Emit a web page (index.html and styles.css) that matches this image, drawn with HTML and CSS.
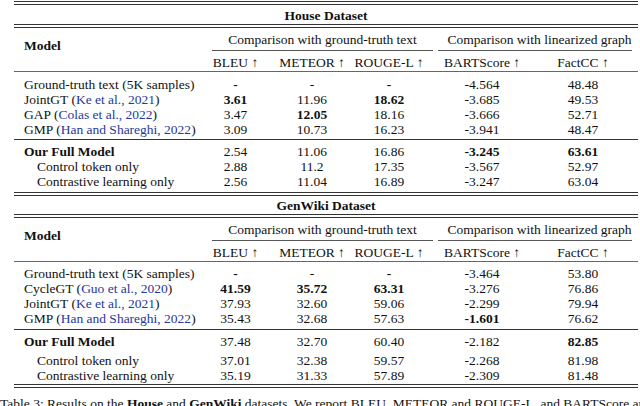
FILE: index.html
```html
<!DOCTYPE html>
<html>
<head>
<meta charset="utf-8">
<link rel="stylesheet" href="styles.css">
</head>
<body>
<div class="page">
  <div class="dbl"></div>
  <div class="title">House Dataset</div>
  <div class="dbl"></div>
  <div class="head">
    <div class="model">Model</div>
    <div class="grp g1">Comparison with ground-truth text</div>
    <div class="grp g2">Comparison with linearized graph</div>
    <div class="h c2">BLEU ↑</div>
    <div class="h c3">METEOR ↑</div>
    <div class="h c4">ROUGE-L ↑</div>
    <div class="h c6">BARTScore ↑</div>
    <div class="h c7">FactCC ↑</div>
  </div>
  <div class="block first mid">
    <div class="row"><span class="name">Ground-truth text (5K samples)</span><span class="b">-</span><span>-</span><span class="b">-</span><span>-4.564</span><span>48.48</span></div>
    <div class="row"><span class="name">JointGT (<span class="cite">Ke et al., 2021</span>)</span><span class="b">3.61</span><span>11.96</span><span class="b">18.62</span><span>-3.685</span><span>49.53</span></div>
    <div class="row"><span class="name">GAP (<span class="cite">Colas et al., 2022</span>)</span><span>3.47</span><span class="b">12.05</span><span>18.16</span><span>-3.666</span><span>52.71</span></div>
    <div class="row"><span class="name">GMP (<span class="cite">Han and Shareghi, 2022</span>)</span><span>3.09</span><span>10.73</span><span>16.23</span><span>-3.941</span><span>48.47</span></div>
  </div>
  <div class="block last">
    <div class="row"><span class="name b">Our Full Model</span><span>2.54</span><span>11.06</span><span>16.86</span><span class="b">-3.245</span><span class="b">63.61</span></div>
    <div class="row"><span class="name sub">Control token only</span><span>2.88</span><span>11.2</span><span>17.35</span><span>-3.567</span><span>52.97</span></div>
    <div class="row"><span class="name sub">Contrastive learning only</span><span>2.56</span><span>11.04</span><span>16.89</span><span>-3.247</span><span>63.04</span></div>
  </div>
  <div class="dbl"></div>
  <div class="title title2">GenWiki Dataset</div>
  <div class="dbl"></div>
  <div class="head">
    <div class="model">Model</div>
    <div class="grp g1">Comparison with ground-truth text</div>
    <div class="grp g2">Comparison with linearized graph</div>
    <div class="h c2">BLEU ↑</div>
    <div class="h c3">METEOR ↑</div>
    <div class="h c4">ROUGE-L ↑</div>
    <div class="h c6">BARTScore ↑</div>
    <div class="h c7">FactCC ↑</div>
  </div>
  <div class="block first2 mid">
    <div class="row"><span class="name">Ground-truth text (5K samples)</span><span class="b">-</span><span>-</span><span class="b">-</span><span>-3.464</span><span>53.80</span></div>
    <div class="row"><span class="name">CycleGT (<span class="cite">Guo et al., 2020</span>)</span><span class="b">41.59</span><span class="b">35.72</span><span class="b">63.31</span><span>-3.276</span><span>76.86</span></div>
    <div class="row"><span class="name">JointGT (<span class="cite">Ke et al., 2021</span>)</span><span>37.93</span><span>32.60</span><span>59.06</span><span>-2.299</span><span>79.94</span></div>
    <div class="row"><span class="name">GMP (<span class="cite">Han and Shareghi, 2022</span>)</span><span>35.43</span><span>32.68</span><span>57.63</span><span class="b">-1.601</span><span>76.62</span></div>
  </div>
  <div class="block last2">
    <div class="row ours"><span class="name b">Our Full Model</span><span>37.48</span><span>32.70</span><span>60.40</span><span>-2.182</span><span class="b">82.85</span></div>
    <div class="row"><span class="name sub">Control token only</span><span>37.01</span><span>32.38</span><span>59.57</span><span>-2.268</span><span>81.98</span></div>
    <div class="row"><span class="name sub">Contrastive learning only</span><span>35.19</span><span>31.33</span><span>57.89</span><span>-2.309</span><span>81.48</span></div>
  </div>
  <div class="dbl"></div>
  <p class="caption">Table 3: Results on the <b>House</b> and <b>GenWiki</b> datasets. We report BLEU, METEOR and ROUGE-L, and BARTScore and FactCC for the <b>House</b> and the <b>GenWiki</b> data.</p>
</div>
</body>
</html>
```

FILE: styles.css
```css
html, body {
  margin: 0;
  padding: 0;
}
body {
  width: 640px;
  height: 406px;
  overflow: hidden;
  background: #fff;
  color: #111;
  font-family: "Liberation Serif", "Times New Roman", serif;
  font-size: 13.5px;
}
.page {
  margin-left: 14px;
  width: 624px;
  padding-top: 1px;
}
.dbl {
  height: 2px;
  border-top: 1px solid #333;
  border-bottom: 1px solid #333;
}
.title {
  box-sizing: border-box;
  height: 19px;
  padding-top: 3px;
  line-height: 15px;
  text-align: center;
  font-weight: bold;
}
.title2 {
  height: 18px;
  padding-top: 2px;
}
.head {
  display: grid;
  grid-template-columns: 196px 51px 102px 52px 21px 92px 110px;
  border-bottom: 1px solid #666;
}
.head .model {
  grid-row: 1 / 3;
  grid-column: 1;
  font-weight: bold;
  padding: 10px 0 0 10px;
  line-height: 15px;
}
.grp {
  grid-row: 1;
  line-height: 15px;
  padding: 4px 0 3px;
  border-bottom: 1px solid #555;
  text-align: center;
  white-space: nowrap;
}
.g1 {
  grid-column: 2 / 6;
  margin: 0 3px 0 2px;
}
.g2 {
  grid-column: 6 / 8;
  margin: 0 6px 0 2px;
  padding-left: 9px;
}
.h {
  grid-row: 2;
  padding: 4px 0 1px;
  line-height: 15px;
  justify-self: center;
  white-space: nowrap;
}
.c2 { grid-column: 2; }
.c3 { grid-column: 3; }
.c4 { grid-column: 4; }
.c6 { grid-column: 6; }
.c7 { grid-column: 7; }

.block.first { padding: 5px 0 2px; }
.block.first2 { padding: 4px 0 3px; }
.block.mid { border-bottom: 1px solid #333; }
.block.last { padding: 4px 0 3px; }
.block.last2 { padding: 4px 0 1px; }
.row.ours { padding-bottom: 4px; }

.row {
  display: grid;
  grid-template-columns: 196px 51px 102px 52px 21px 92px 110px;
  line-height: 15px;
  white-space: nowrap;
}
.row > span {
  justify-self: center;
}
.row > .name {
  justify-self: start;
  padding-left: 10px;
}
.row > .sub {
  padding-left: 23px;
}
.row > :nth-child(5) { grid-column: 6; }
.row > :nth-child(6) { grid-column: 7; }
.b { font-weight: bold; }
.cite { color: #26379e; }

.caption {
  margin: 8px 0 0 -14px;
  line-height: 15px;
  white-space: nowrap;
}
```
